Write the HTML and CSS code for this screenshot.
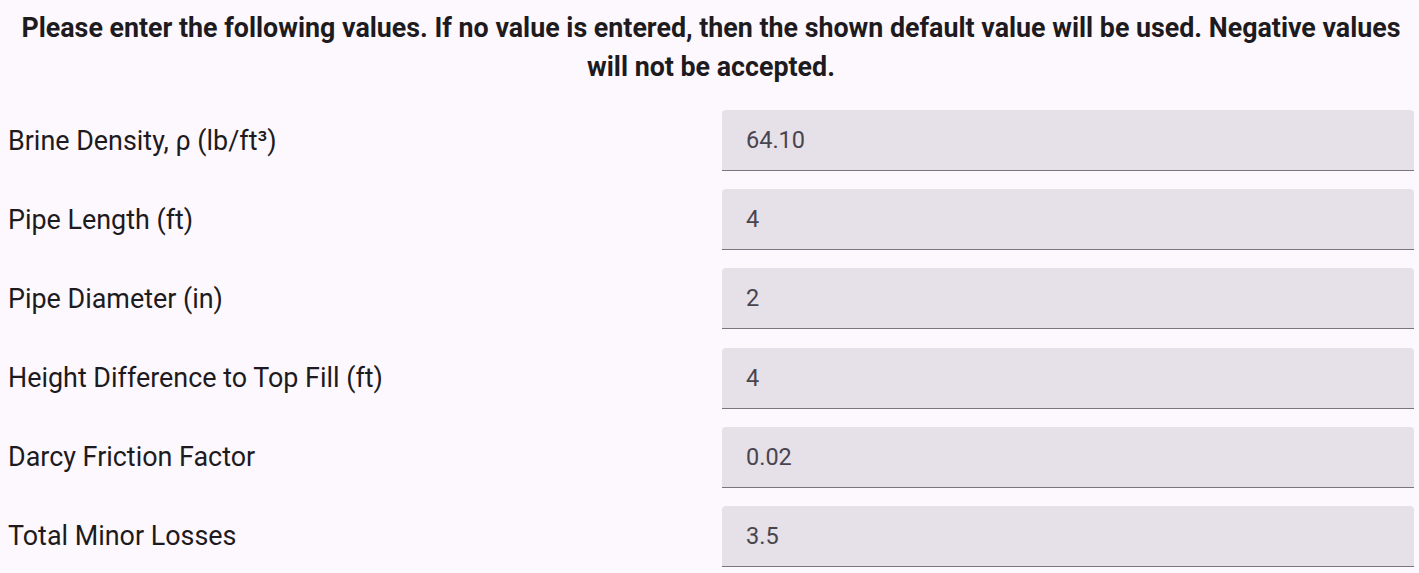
FILE: index.html
```html
<!DOCTYPE html>
<html>
<head>
<meta charset="utf-8">
<link rel="stylesheet" href="styles.css">
</head>
<body>
<div class="page">
  <h2 class="intro">Please enter the following values. If no value is entered, then the shown default value will be used. Negative values will not be accepted.</h2>
  <div class="form">
    <label class="label">Brine Density, ρ (lb/ft³)</label>
    <div class="field"><span class="value">64.10</span></div>
    <label class="label">Pipe Length (ft)</label>
    <div class="field"><span class="value">4</span></div>
    <label class="label">Pipe Diameter (in)</label>
    <div class="field"><span class="value">2</span></div>
    <label class="label">Height Difference to Top Fill (ft)</label>
    <div class="field"><span class="value">4</span></div>
    <label class="label">Darcy Friction Factor</label>
    <div class="field"><span class="value">0.02</span></div>
    <label class="label">Total Minor Losses</label>
    <div class="field"><span class="value">3.5</span></div>
  </div>
</div>
</body>
</html>
```
FILE: styles.css
```css
html, body {
  margin: 0;
  padding: 0;
  background: #fdf8fd;
}
body {
  font-family: Roboto, "Noto Sans", sans-serif;
  color: #1d1b20;
}
.page {
  padding: 0 5px 0 8px;
}
.intro {
  margin: 0;
  padding-top: 9px;
  font-size: 26.8px;
  font-weight: 700;
  line-height: 39px;
  text-align: center;
  letter-spacing: 0;
}
.form {
  display: grid;
  grid-template-columns: 1fr 1fr;
  column-gap: 22px;
  row-gap: 18.2px;
  margin-top: 23px;
}
.label {
  display: flex;
  align-items: center;
  font-size: 26.9px;
}
.field {
  height: 60px;
  background: #e6e0e9;
  border-bottom: 1px solid #79747e;
  border-radius: 4px 4px 0 0;
  display: flex;
  align-items: center;
  padding-left: 24px;
}
.value {
  font-size: 23.5px;
  color: #49454f;
}
```
